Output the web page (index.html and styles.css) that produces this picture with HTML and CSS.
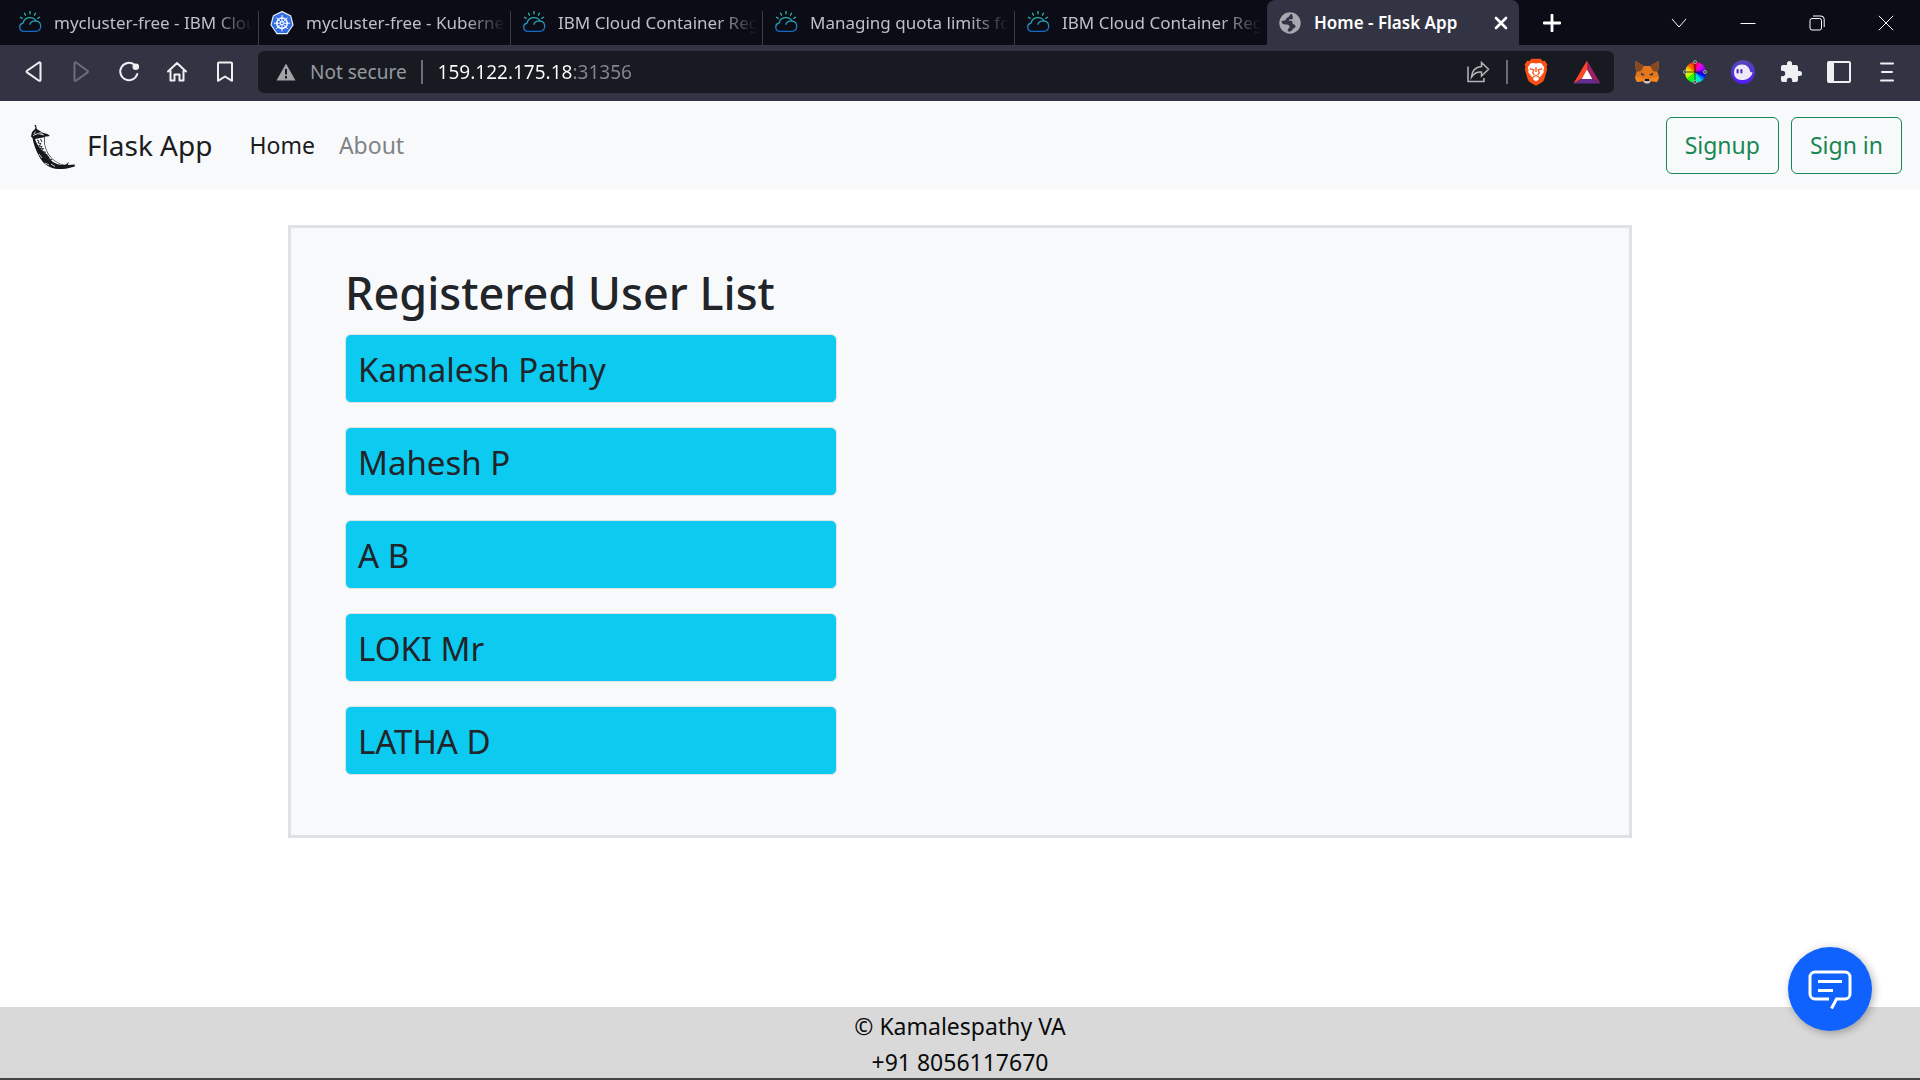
FILE: index.html
```html
<!DOCTYPE html>
<html lang="en">
<head>
<meta charset="utf-8">
<title>Home - Flask App</title>
<link rel="stylesheet" href="styles.css">
</head>
<body>
<svg class="defs" aria-hidden="true">
  <defs>
    <linearGradient id="cloud-ink" x1="0" y1="0" x2="0" y2="24" gradientUnits="userSpaceOnUse">
      <stop offset="0" stop-color="#2fc3a0"/><stop offset=".55" stop-color="#2391b5"/><stop offset="1" stop-color="#0b55d0"/>
    </linearGradient>
    <linearGradient id="ghost-bg" x1="0" y1="0" x2="0" y2="1">
      <stop offset="0" stop-color="#534bb1"/><stop offset="1" stop-color="#551bf9"/>
    </linearGradient>
    <symbol id="cloud" viewBox="0 0 24 24">
      <g fill="none" stroke="url(#cloud-ink)" stroke-width="1.3">
        <path d="M4.800 20.300a4.300 4.300 0 0 1 .2-8.300 7.300 7.300 0 0 1 13.300-1.800 5.100 5.100 0 0 1 0 10.100z"/>
        <path d="M11.500 13.800a5.500 5.500 0 0 1 6.800-3.600"/>
        <path d="M12 0v3.300M6.200 1.800l1.600 2.800M17.800 1.800l-1.600 2.800M2 6l2.700 1.600M22 6l-2.700 1.600"/>
      </g>
    </symbol>
  </defs>
</svg>

<header class="browser">
  <div class="tabstrip">
    <div class="tab"><svg class="favicon"><use href="#cloud"/></svg><span class="tab-title">mycluster-free - IBM Cloud</span></div>
    <div class="tab">
      <svg class="favicon" viewBox="0 0 24 24">
        <path d="M12 .6l8.600 4.100 2.400 9.300-6 8.700H7l-6-8.700 2.400-9.300z" fill="#326de6" stroke="#e8edf8" stroke-width="1.200" stroke-linejoin="round"/>
        <circle cx="12" cy="12.200" r="5.200" fill="none" stroke="#fff" stroke-width="1.500"/>
        <path d="M12 4v16.400M4 12.200h16M6.300 6.500l11.400 11.400M17.700 6.500L6.300 17.900" stroke="#fff" stroke-width="1"/>
        <circle cx="12" cy="12.200" r="1.500" fill="#326de6" stroke="#fff"/>
      </svg>
      <span class="tab-title">mycluster-free - Kubernetes</span>
    </div>
    <div class="tab"><svg class="favicon"><use href="#cloud"/></svg><span class="tab-title">IBM Cloud Container Registry</span></div>
    <div class="tab"><svg class="favicon"><use href="#cloud"/></svg><span class="tab-title">Managing quota limits for</span></div>
    <div class="tab tab-last"><svg class="favicon"><use href="#cloud"/></svg><span class="tab-title">IBM Cloud Container Registry</span></div>
    <div class="tab tab-active">
      <svg class="favicon" viewBox="0 0 24 24">
        <circle cx="12" cy="12" r="10.700" fill="#a5a8ae"/>
        <path d="M14 3c-3 .3-2 2.700-4.500 3.500-1.500.5-1 2.200-2.300 2.700L3.700 10c0 3 1.300 3.300 3.500 3.400 2.500.1 4.800.6 4.300 2.600-.4 1.500-2 1.500-1.700 4.500 2.700.3 4.200-.6 4.700-2 .5-1.500 3-1.300 3-3.300 0-2-2.500-1.500-3-3-.3-1 .5-1.600-.8-2.200-1-.5-2.700.5-2.700-.8 0-1.500 2.500-.5 3.500-1.200 1.200-.8-.3-3.500-.5-5z" fill="#323443"/>
      </svg>
      <span class="tab-title">Home - Flask App</span>
      <button class="tab-close" aria-label="Close tab"><svg width="14" height="14" viewBox="0 0 14 14"><path d="M2 2l10 10M12 2L2 12" stroke="#fff" stroke-width="2.600" stroke-linecap="round"/></svg></button>
    </div>
    <button class="new-tab" aria-label="New tab"><svg width="18" height="18" viewBox="0 0 18 18"><path d="M9 1v16M1 9h16" stroke="#fff" stroke-width="2.800" stroke-linecap="round"/></svg></button>
    <div class="window-controls">
      <button aria-label="Search tabs"><svg width="16" height="16" viewBox="0 0 16 16"><path d="M1 4l7 8 7-8"/></svg></button>
      <button aria-label="Minimize"><svg width="16" height="16" viewBox="0 0 16 16"><path d="M.5 8.500h15"/></svg></button>
      <button aria-label="Restore"><svg width="16" height="16" viewBox="0 0 16 16"><rect x="1" y="3.500" width="11.500" height="11.500" rx="2"/><path d="M4 1h8a3.200 3.200 0 0 1 3.200 3.200V12"/></svg></button>
      <button aria-label="Close window"><svg width="16" height="16" viewBox="0 0 16 16"><path d="M.8.800l14.400 14.400M15.200.800L.8 15.200"/></svg></button>
    </div>
  </div>

  <div class="toolbar">
    <div class="tools">
      <button aria-label="Back"><svg width="24" height="24" viewBox="0 0 24 24"><path class="line" d="M19.500 3v17a1 1 0 0 1-1.500.7L6 12.400a1 1 0 0 1 0-1.600L18 2.500a1 1 0 0 1 1.500.5z"/></svg></button>
      <button aria-label="Forward"><svg width="24" height="24" viewBox="0 0 24 24"><path class="line line-off" d="M5.500 3v17a1 1 0 0 0 1.500.7l11.500-8.300a1 1 0 0 0 0-1.600L7 2.500a1 1 0 0 0-1.500.5z"/></svg></button>
      <button aria-label="Reload"><svg width="24" height="24" viewBox="0 0 24 24"><path class="line" d="M17.500 4.800A8.700 8.700 0 1 0 20.300 14"/><circle cx="18.800" cy="6.800" r="3.300" fill="#f0f0f2"/></svg></button>
      <button aria-label="Home"><svg width="24" height="24" viewBox="0 0 24 24"><path class="line" d="M3 11.500L12 3l9 8.500M5.500 11v9.500h4v-6h5v6h4V11"/></svg></button>
      <button aria-label="Bookmark"><svg width="24" height="24" viewBox="0 0 24 24"><path class="line" d="M5 3.500a1 1 0 0 1 1-1h12a1 1 0 0 1 1 1v17.300l-7-4.300-7 4.300z"/></svg></button>
    </div>

    <div class="addressbar">
      <svg width="20" height="18" viewBox="0 0 20 18"><path d="M10 .5L19.500 17.500H.5z" fill="#a0a3a8"/><path d="M10 6v5.500M10 13v2.500" stroke="#181a22" stroke-width="2"/></svg>
      <label class="security" for="address">Not secure</label>
      <span class="divider"></span>
      <input class="address" id="address" type="text" value="159.122.175.18:31356">
      <button aria-label="Share"><svg width="24" height="22" viewBox="0 0 24 22"><path d="M2 5.500V20.500H18V17M15.500 1.500l7 6.800-7 6.800v-4c-4.500-.3-7.500 1-10 5 .3-6 4-10 10-10.600z" fill="none" stroke="#b4b5b9" stroke-width="1.500"/></svg></button>
      <span class="divider"></span>
      <button class="shield" aria-label="Brave Shields"><svg width="24" height="28" viewBox="0 0 24 28">
        <path d="M7.500.8h9l2 2.200 2.300-.2 2.500 3.700-.8 2.700.7 2-3 10.300c-.5 1.500-1.500 2.300-3 3.300L12 27.800l-5.200-3c-1.500-1-2.500-1.800-3-3.300L.8 11.200l.7-2-.8-2.700 2.500-3.700 2.300.2z" fill="#fb5014"/>
        <path d="M12 5.500l3-.6 2.300.3 3 4.300-.8 2.500.3 2.300-3.300 4.200-2.200 1.200.7 1.500L12 23.500l-3-2.300.7-1.500-2.200-1.200-3.300-4.200.3-2.300-.8-2.500 3-4.300L9 4.900z" fill="#fff"/>
        <path d="M5.800 10.700l4 1.300-1 2.700 1.500 2.300M18.200 10.700l-4 1.300 1 2.700-1.500 2.300M12 9v5M9 19l3-1.500 3 1.500" fill="none" stroke="#fb5014" stroke-width="1.300"/>
      </svg></button>
      <button class="rewards" aria-label="Brave Rewards"><svg width="28" height="24" viewBox="0 0 28 24"><path d="M14 .5V10L9 18.500.5 23.500z" fill="#ff4724"/><path d="M14 .5V10l5 8.500 8.500 5z" fill="#9e1f63"/><path d="M.5 23.500L9 18.500h10l8.500 5z" fill="#662d91"/><path d="M14 9.500l5.300 9.500H8.700z" fill="#fff"/></svg></button>
    </div>

    <div class="tools">
      <button aria-label="MetaMask"><svg width="26" height="24" viewBox="0 0 26 24">
        <path d="M1.500 1l8.500 5h6l8.500-5 .5 6-1.500 5 1.500 5-2 5-6-1-2 2h-4l-2-2-6 1-2-5 1.500-5L1 7z" fill="#e4761b"/>
        <path d="M1.500 1l8.500 5-3 5-4.500 1L1 7zM24.500 1L16 6l3 5 4.500 1L25 7z" fill="#854a24"/>
        <path d="M3 17l6 1 1 3-7 1-2-4zM23 17l-6 1-1 3 7 1 2-4z" fill="#f6851b"/>
        <path d="M7 12.500l4 2.500-3.500.5zM19 12.500L15 15l3.500.5z" fill="#243447"/>
        <path d="M10 19.500h6l.5 2.500-2 1.500h-3l-2-1.500z" fill="#d7c1b3"/><path d="M11 19h4l.5 2h-5z" fill="#16161a"/>
      </svg></button>
      <button class="wheel-button" aria-label="Color picker"><span class="wheel"></span><svg class="wheel-marks" width="24" height="24" viewBox="0 0 24 24"><path d="M12 3v18M3 12h18" stroke="#111" stroke-width=".8"/><path d="M5 5l14 14M19 5L5 19" stroke="#111" stroke-opacity=".4" stroke-width=".6"/><g fill="#333" stroke="#aaa"><circle cx="12" cy="2" r="1.500"/><circle cx="22" cy="12" r="1.500"/><circle cx="12" cy="22" r="1.500"/><circle cx="2" cy="12" r="1.500"/></g></svg></button>
      <button aria-label="Phantom"><svg width="24" height="24" viewBox="0 0 24 24"><circle cx="12" cy="12" r="12" fill="url(#ghost-bg)"/><path d="M3 12.500C3 7.500 6.500 4.500 11 4.500c5 0 7.500 3.500 8 6.500.3 1.500 1 1.500 2.500 1.200C21 16.500 17 20 10.500 20 6 20 3 17 3 12.500z" fill="#eeeafc"/><rect x="5.500" y="9" width="2.200" height="4.500" rx="1.100" fill="#4c35a8"/><rect x="9.300" y="9" width="2.200" height="4.500" rx="1.100" fill="#4c35a8"/></svg></button>
      <button aria-label="Extensions"><svg width="24" height="24" viewBox="0 0 24 24"><path d="M20.500 11H19V7a2 2 0 0 0-2-2h-4V3.500a2.500 2.500 0 0 0-5 0V5H4a2 2 0 0 0-2 2v3.800h1.500a2.700 2.700 0 0 1 0 5.400H2V20a2 2 0 0 0 2 2h3.800v-1.500a2.700 2.700 0 0 1 5.400 0V22H17a2 2 0 0 0 2-2v-4h1.500a2.500 2.500 0 0 0 0-5z" fill="#f0f0f2"/></svg></button>
      <button aria-label="Sidebar"><svg width="24" height="22" viewBox="0 0 24 22"><rect x="1" y="1" width="22" height="20" rx="1" fill="none" stroke="#f0f0f2" stroke-width="2"/><path d="M1 1h6v20H1z" fill="#f0f0f2"/></svg></button>
      <button aria-label="Menu"><svg width="16" height="20" viewBox="0 0 16 20"><path d="M2 1.500h12M3 10h10M2 18.500h12" stroke="#f0f0f2" stroke-width="2" stroke-linecap="round"/></svg></button>
    </div>
  </div>
</header>

<nav class="navbar">
  <a class="brand" href="#">
    <svg class="logo" width="48" height="48" viewBox="0 0 48 48">
      <path d="M4 15.500L5 11l2.500-2.500L8.500 7 7.500 4H9l.8 4 5.500 3.500 5.500 1.700L23 15l-5.300.8c.3 4-.2 8 1.300 11.500 2 6 6 11 11 13.700 3 1.800 6 3 9 2.600l3-2.800-1.200 3.200 7-.4v1.800C43 46.500 38 48.500 31 48c-8-.5-14-4.500-18-11-4-7-6.500-14-7.500-20z" fill="#16171a"/>
      <path d="M8 18l9.200-1.800c-.4 4 0 7.500 1.300 11.500 2 6 6 10.500 10.800 13.300 2 1.300 4 2.200 6 2.600-2 .4-5-.2-8-1.800-3-1.600-4.500-4-6.300-7-2-3-4-3-6.500-6-3-3.500-5.500-7-6.500-10.800z" fill="#f8f9fa"/>
      <path d="M10 19l2 1-1 2 3 .5-2 2.500 3 .5-2 2.500 3.500-.5-2 3 4 .5-2.500 3 4-.5-2 3 4-.5-1 3 4-.5M13.500 18l1.500 3" fill="none" stroke="#222" stroke-width="1"/>
      <path d="M6 14.500l5-2 6 1.500M8.500 10.500L7 13M12.500 11.500l3 1M18 42l4 2M24 43l4 2.500M12 33l3 4" fill="none" stroke="#e3e4e6" stroke-width=".9"/>
    </svg>
    <span>Flask App</span>
  </a>
  <div class="nav-links">
    <a class="nav-active" href="#" aria-current="page">Home</a>
    <a href="#">About</a>
  </div>
  <div class="nav-actions">
    <button class="outline-button">Signup</button>
    <button class="outline-button">Sign in</button>
  </div>
</nav>

<main>
  <section class="panel">
    <h1>Registered User List</h1>
    <ul class="users">
      <li>Kamalesh Pathy</li>
      <li>Mahesh P</li>
      <li>A B</li>
      <li>LOKI Mr</li>
      <li>LATHA D</li>
    </ul>
  </section>
</main>

<footer class="footer">
  <div>© Kamalespathy VA</div>
  <div>+91 8056117670</div>
</footer>

<button class="chat" aria-label="Open chat">
  <svg width="44" height="42" viewBox="0 0 44 42"><path d="M21 31H7a5 5 0 0 1-5-5V9a5 5 0 0 1 5-5h30a5 5 0 0 1 5 5v17a5 5 0 0 1-5 5h-8.500L23.500 40.500M10 13.500h24M10 22.500h15" fill="none" stroke="#fff" stroke-width="3"/></svg>
</button>
</body>
</html>
```

FILE: styles.css
```css
* { box-sizing: border-box; }

body {
  display: flex;
  flex-direction: column;
  min-height: 100vh;
  margin: 0;
  background: #fff;
  color: #212529;
  font: 400 23px/36px "Noto Sans", "Open Sans", sans-serif;
}

button {
  display: flex;
  align-items: center;
  justify-content: center;
  margin: 0;
  padding: 0;
  border: 0;
  background: none;
  color: inherit;
  font: inherit;
}

svg { display: block; flex: none; }
a { color: inherit; text-decoration: none; }
.defs { position: absolute; width: 0; height: 0; }

/* Browser frame */
.tabstrip {
  display: flex;
  height: 45px;
  padding-left: 7px;
  background: #0b0c15;
  color: #bfc0c4;
  font-size: 17px;
}

.tab {
  display: flex;
  flex: 0 1 252px;
  align-items: center;
  gap: 12px;
  min-width: 0;
  padding: 0 6px 0 11px;
  background: linear-gradient(#3d3d3f, #3d3d3f) right bottom / 1px 34px no-repeat;
}

.tab-last { background: none; }
.favicon { width: 24px; height: 24px; }

.tab-title {
  flex: 1;
  overflow: hidden;
  white-space: nowrap;
  mask-image: linear-gradient(to right, #000 calc(100% - 40px), transparent);
}

.tab-active {
  border-radius: 8px 8px 0 0;
  background: #323443;
  color: #fff;
  font-weight: 600;
}

.tab-active .tab-title { mask-image: none; }
.tab-close { width: 24px; height: 24px; }
.new-tab { width: 66px; }
.window-controls { display: flex; margin-left: auto; }
.window-controls button { width: 69px; }
.window-controls svg { fill: none; stroke: #fff; stroke-width: 1; }

.toolbar {
  display: flex;
  align-items: center;
  gap: 9px;
  height: 56px;
  padding: 0 9px 2px;
  background: #323443;
}

.tools { display: flex; }
.tools button { width: 48px; height: 42px; }
.line { fill: none; stroke: #f0f0f2; stroke-width: 2; stroke-linejoin: round; stroke-linecap: round; }
.line-off { stroke: #6b6d78; }

.addressbar {
  display: flex;
  flex: 1;
  align-items: center;
  height: 42px;
  padding: 0 13px 0 18px;
  border-radius: 6px;
  background: #181a22;
  font-size: 19px;
}

.security { margin: 0 14px; color: #96999f; }
.divider { width: 2px; height: 24px; background: #6d6e73; }

.address {
  flex: 1;
  min-width: 0;
  height: 36px;
  margin-left: 15px;
  padding: 0;
  border: 0;
  outline: 0;
  color: #fff;
  font: inherit;
  /* host is white, the port after it is dimmed */
  background: linear-gradient(to right, #fff 134px, #85878c 134px);
  background-clip: text;
  -webkit-text-fill-color: transparent;
}

.addressbar button { height: 36px; }
.addressbar .divider:nth-of-type(2) { margin: 0 16px; }
.rewards { margin-left: 25px; }

.wheel-button { display: grid; place-items: center; }
.wheel-button > * { grid-area: 1 / 1; }
.wheel {
  width: 21px;
  height: 21px;
  border-radius: 50%;
  background: conic-gradient(#f03, #f0f, #80f, #00f, #0cf, #0f8, #0f0, #cf0, #fd0, #f60, #f00);
}

/* Page */
.navbar {
  display: flex;
  align-items: center;
  height: 88px;
  padding: 0 18px 0 27px;
  background: #f8f9fa;
}

.brand {
  display: flex;
  align-items: center;
  gap: 12px;
  color: #1a1c1e;
  font-size: 28px;
}

.nav-links { display: flex; gap: 24px; margin-left: 37px; color: #808285; }
.nav-active { color: #1a1c1e; }
.nav-actions { display: flex; gap: 12px; margin-left: auto; }

.outline-button {
  height: 57px;
  padding: 0 18px;
  border: 1px solid #198754;
  border-radius: 6px;
  color: #198754;
}

main { flex: 1; padding: 36px 0; }

.panel {
  width: 70%;
  margin: 0 auto;
  padding: 36px 54px 60px;
  border: 3px solid #dee2e6;
  background: #f8f9fa;
}

h1 {
  margin: 0 0 12px;
  font-size: 45px;
  font-weight: 500;
  line-height: 58px;
}

.users {
  display: grid;
  gap: 24px;
  width: 40%;
  margin: 0;
  padding: 0;
  list-style: none;
}

.users li {
  padding: 7px 12px 5px;
  border: 1px solid #dee2e6;
  border-radius: 6px;
  background: #0dcaf0;
  font-size: 33px;
  line-height: 55px;
}

.footer {
  padding-top: 1px;
  background: #d9d9d9;
  box-shadow: inset 0 -2px #444;
  color: #0b0b0b;
  text-align: center;
}

.chat {
  position: fixed;
  right: 48px;
  bottom: 49px;
  width: 84px;
  height: 84px;
  border-radius: 50%;
  background: #0f62fe;
  box-shadow: 2px 2px 8px rgb(0 0 0 / 30%);
}
```
